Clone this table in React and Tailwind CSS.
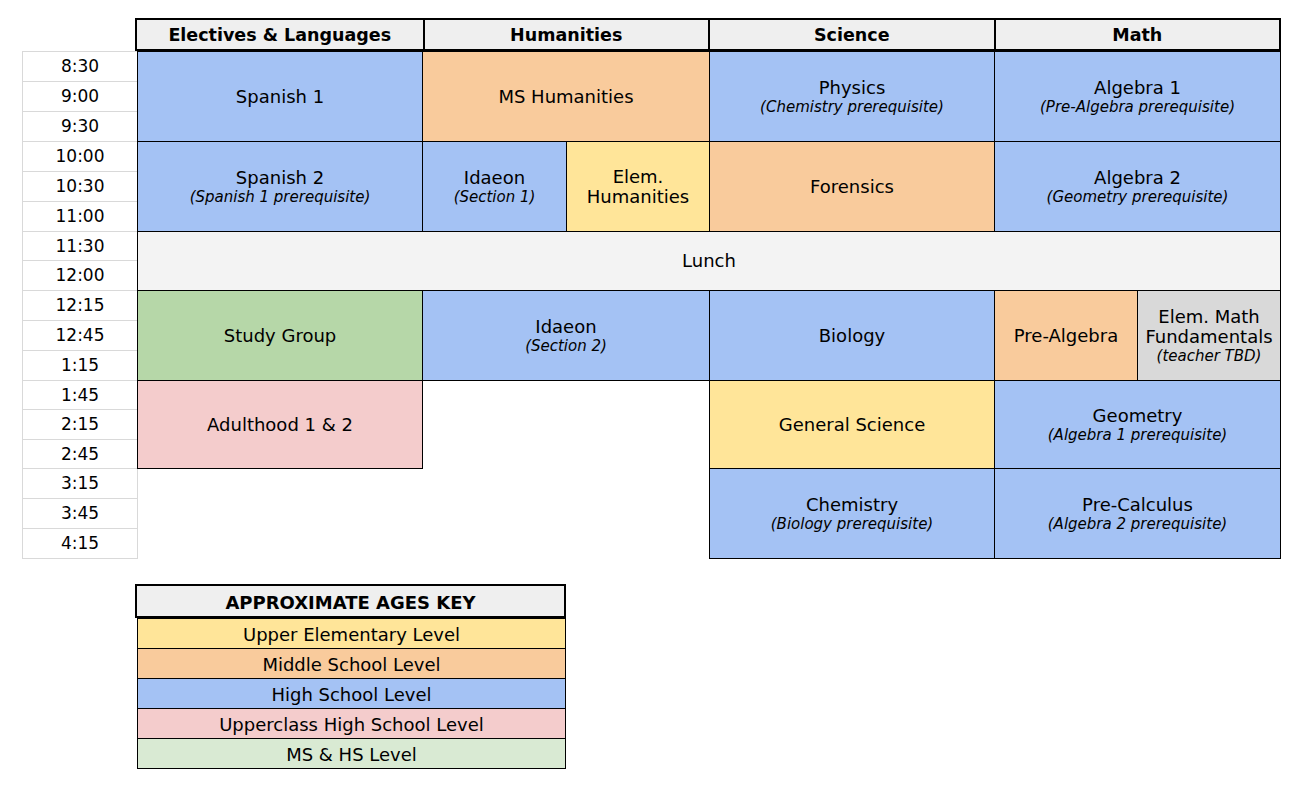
const times = [
  ["8:30", "row-start-1"],
  ["9:00", "row-start-2"],
  ["9:30", "row-start-3"],
  ["10:00", "row-start-4"],
  ["10:30", "row-start-5"],
  ["11:00", "row-start-6"],
  ["11:30", "row-start-7"],
  ["12:00", "row-start-8"],
  ["12:15", "row-start-9"],
  ["12:45", "row-start-10"],
  ["1:15", "row-start-11"],
  ["1:45", "row-start-12"],
  ["2:15", "row-start-13"],
  ["2:45", "row-start-14"],
  ["3:15", "row-start-15"],
  ["3:45", "row-start-16"],
  ["4:15", "row-start-17"],
];

const blue = "bg-[#a4c2f4]";
const orange = "bg-[#f9cb9c]";
const yellow = "bg-[#ffe599]";

const classes = [
  { pos: "col-start-2 row-start-1 row-span-3", bg: blue, title: ["Spanish 1"] },
  { pos: "col-start-2 row-start-4 row-span-3", bg: blue, title: ["Spanish 2"], sub: "(Spanish 1 prerequisite)" },
  { pos: "col-start-3 col-span-2 row-start-1 row-span-3", bg: orange, title: ["MS Humanities"] },
  { pos: "col-start-3 row-start-4 row-span-3", bg: blue, title: ["Idaeon"], sub: "(Section 1)" },
  { pos: "col-start-4 row-start-4 row-span-3", bg: yellow, title: ["Elem.", "Humanities"] },
  { pos: "col-start-5 row-start-1 row-span-3", bg: blue, title: ["Physics"], sub: "(Chemistry prerequisite)" },
  { pos: "col-start-5 row-start-4 row-span-3", bg: orange, title: ["Forensics"] },
  { pos: "col-start-6 col-span-2 row-start-1 row-span-3", bg: blue, title: ["Algebra 1"], sub: "(Pre-Algebra prerequisite)" },
  { pos: "col-start-6 col-span-2 row-start-4 row-span-3", bg: blue, title: ["Algebra 2"], sub: "(Geometry prerequisite)" },
  { pos: "col-start-2 col-span-6 row-start-7 row-span-2", bg: "bg-[#f3f3f3]", title: ["Lunch"] },
  { pos: "col-start-2 row-start-9 row-span-3", bg: "bg-[#b6d7a8]", title: ["Study Group"] },
  { pos: "col-start-3 col-span-2 row-start-9 row-span-3", bg: blue, title: ["Idaeon"], sub: "(Section 2)" },
  { pos: "col-start-5 row-start-9 row-span-3", bg: blue, title: ["Biology"] },
  { pos: "col-start-6 row-start-9 row-span-3", bg: orange, title: ["Pre-Algebra"] },
  { pos: "col-start-7 row-start-9 row-span-3", bg: "bg-[#d9d9d9]", title: ["Elem. Math", "Fundamentals"], sub: "(teacher TBD)" },
  { pos: "col-start-2 row-start-12 row-span-3", bg: "bg-[#f4cccc]", title: ["Adulthood 1 & 2"] },
  { pos: "col-start-5 row-start-12 row-span-3", bg: yellow, title: ["General Science"] },
  { pos: "col-start-6 col-span-2 row-start-12 row-span-3", bg: blue, title: ["Geometry"], sub: "(Algebra 1 prerequisite)" },
  { pos: "col-start-5 row-start-15 row-span-3", bg: blue, title: ["Chemistry"], sub: "(Biology prerequisite)" },
  { pos: "col-start-6 col-span-2 row-start-15 row-span-3", bg: blue, title: ["Pre-Calculus"], sub: "(Algebra 2 prerequisite)" },
];

const legend = [
  ["Upper Elementary Level", "bg-[#ffe599]"],
  ["Middle School Level", "bg-[#f9cb9c]"],
  ["High School Level", "bg-[#a4c2f4]"],
  ["Upperclass High School Level", "bg-[#f4cccc]"],
  ["MS & HS Level", "bg-[#d9ead3]"],
];

function Cell({ pos, bg, title, sub }) {
  return (
    <div
      className={`${pos} ${bg} -mr-px -mb-px border border-black flex flex-col items-center justify-center text-center`}
    >
      {title.map((t) => (
        <div key={t} className="text-[18px] leading-[20px]">
          {t}
        </div>
      ))}
      {sub && <div className="text-[15px] leading-[18px] italic">{sub}</div>}
    </div>
  );
}

export default function App() {
  return (
    <div className="min-h-screen bg-white pt-[18px] pl-[22px] text-black font-['DejaVu_Sans',sans-serif]">
      {/* column headers */}
      <div className="ml-[113px] w-[1146px] h-[33px] border-2 border-black bg-[#efefef] grid grid-cols-4 font-bold text-[17.5px]">
        <div className="flex items-center justify-center pt-[2px]">Electives &amp; Languages</div>
        <div className="flex items-center justify-center pt-[2px] border-l-2 border-black">Humanities</div>
        <div className="flex items-center justify-center pt-[2px] border-l-2 border-black">Science</div>
        <div className="flex items-center justify-center pt-[2px] border-l-2 border-black">Math</div>
      </div>

      {/* schedule */}
      <div className="grid grid-cols-[115px_285px_144px_143px_285px_143px_143px] grid-rows-[30px_30px_30px_30px_30px_30px_29px_30px_30px_30px_30px_29px_30px_29px_30px_30px_30px]">
        {times.map(([t, row]) => (
          <div
            key={t}
            className={`col-start-1 ${row} -mr-px -mb-px border border-[#d9d9d9] flex items-center justify-center pt-[1px] text-[17px]`}
          >
            {t}
          </div>
        ))}
        {classes.map((c) => (
          <Cell key={c.pos} {...c} />
        ))}
      </div>

      {/* key */}
      <div className="mt-[26px] ml-[113px] w-[431px]">
        <div className="h-[34px] border-2 border-black bg-[#efefef] flex items-center justify-center pt-[2px] font-bold text-[18px]">
          APPROXIMATE AGES KEY
        </div>
        <div className="ml-[2px] w-[429px]">
          {legend.map(([label, bg]) => (
            <div
              key={label}
              className={`${bg} h-[31px] -mt-px first:mt-0 border border-black flex items-center justify-center pt-[1px] text-[18px]`}
            >
              {label}
            </div>
          ))}
        </div>
      </div>
    </div>
  );
}
